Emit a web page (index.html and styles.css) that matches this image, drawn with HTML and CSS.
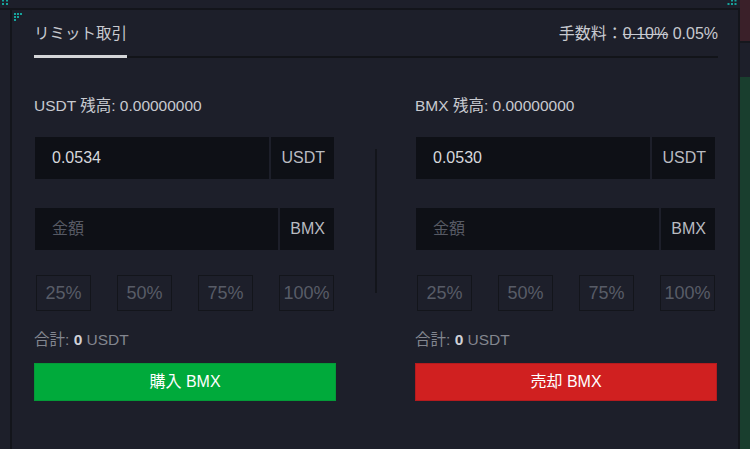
FILE: index.html
```html
<!DOCTYPE html>
<html lang="ja">
<head>
<meta charset="utf-8">
<title>リミット取引</title>
<link rel="stylesheet" href="styles.css">
</head>
<body>
<div class="desktop">
  <div class="main">
    <div class="topstrip">
      <svg class="dots-tl" width="8" height="6" viewBox="0 0 8 6"><rect x="1" y="0" width="2" height="1.5"/><rect x="5" y="0" width="2" height="1.5"/><rect x="1" y="3" width="2" height="2"/><rect x="5" y="3" width="2" height="2"/></svg>
      <svg class="dots-tr" width="12" height="6" viewBox="0 0 12 6"><rect x="6" y="0" width="2" height="1.5"/><rect x="9.5" y="0" width="2" height="1.5"/><rect x="2.5" y="3" width="2" height="2"/><rect x="6" y="3" width="2" height="2"/><rect x="9.5" y="3" width="2" height="2"/></svg>
    </div>
    <div class="body-row">
      <div class="gutter"></div>
      <section class="panel">
        <svg class="handle" width="9" height="9" viewBox="0 0 9 9"><rect x="0" y="0" width="2" height="2"/><rect x="3" y="0" width="2" height="2"/><rect x="6" y="0" width="2" height="2"/><rect x="0" y="3" width="2" height="2"/><rect x="3" y="3" width="2" height="2"/><rect x="0" y="6" width="2" height="2"/></svg>
        <div class="tabbar">
          <div class="tab active">リミット取引</div>
          <div class="fee">手数料：<s>0.10%</s> 0.05%</div>
        </div>
        <div class="columns">
          <div class="col">
            <div class="balance">USDT 残高: 0.00000000</div>
            <div class="field first">
              <div class="input value">0.0534</div>
              <div class="suffix">USDT</div>
            </div>
            <div class="field second">
              <div class="input placeholder">金額</div>
              <div class="suffix">BMX</div>
            </div>
            <div class="pcts">
              <div class="pct">25%</div>
              <div class="pct">50%</div>
              <div class="pct">75%</div>
              <div class="pct">100%</div>
            </div>
            <div class="total">合計: <b>0</b> USDT</div>
            <div class="btn buy">購入 BMX</div>
          </div>
          <div class="divider"></div>
          <div class="col">
            <div class="balance">BMX 残高: 0.00000000</div>
            <div class="field first">
              <div class="input value">0.0530</div>
              <div class="suffix">USDT</div>
            </div>
            <div class="field second">
              <div class="input placeholder">金額</div>
              <div class="suffix">BMX</div>
            </div>
            <div class="pcts">
              <div class="pct">25%</div>
              <div class="pct">50%</div>
              <div class="pct">75%</div>
              <div class="pct">100%</div>
            </div>
            <div class="total">合計: <b>0</b> USDT</div>
            <div class="btn sell">売却 BMX</div>
          </div>
        </div>
      </section>
    </div>
  </div>
  <div class="side">
    <div class="side-red"></div>
    <div class="side-mid"></div>
    <div class="side-green"></div>
  </div>
</div>
</body>
</html>
```
FILE: styles.css
```css
* { box-sizing: border-box; }
html, body {
  margin: 0;
  padding: 0;
  background: #1d1f2a;
  font-family: "Liberation Sans", "Noto Sans CJK JP", sans-serif;
  color: #c8cad0;
  overflow: hidden;
}
.desktop {
  display: flex;
  width: 750px;
  height: 449px;
}
.main {
  width: 740px;
  display: flex;
  flex-direction: column;
}
.topstrip {
  height: 10px;
  border-bottom: 2px solid #13151b;
  display: flex;
  justify-content: space-between;
  align-items: flex-start;
  padding: 0 2px 0 1px;
}
.topstrip svg { fill: #16a39c; display: block; }
.dots-tr { margin-right: 1px; margin-left: auto; }
.body-row {
  flex: 1;
  display: flex;
}
.gutter {
  width: 12px;
  border-right: 2px solid #13151b;
}
.panel {
  position: relative;
  flex: 1;
  border-right: 2px solid #13151b;
  padding: 0 20px 0 22px;
}
.handle {
  position: absolute;
  left: 2px;
  top: 3px;
  fill: #16a39c;
}
.tabbar {
  display: flex;
  justify-content: space-between;
  align-items: flex-end;
  padding-top: 13px;
  border-bottom: 2px solid #121419;
  height: 48px;
}
.tab {
  font-size: 15.5px;
  line-height: 22px;
  padding-bottom: 10px;
  color: #c8cad0;
}
.tab.active {
  border-bottom: 3px solid #d4d5d8;
  margin-bottom: -2px;
  width: 93px;
}
.fee {
  font-size: 16px;
  line-height: 22px;
  padding-bottom: 11px;
  color: #c8cad0;
}
.fee s { text-decoration-thickness: 1px; }
.columns {
  display: grid;
  grid-template-columns: 302px 2px 302px;
  column-gap: 38.5px;
}
.col {
  display: flex;
  flex-direction: column;
}
.balance {
  margin-top: 37px;
  font-size: 15.5px;
  line-height: 22px;
  color: #c8cad0;
}
.field {
  display: flex;
  gap: 2px;
  height: 42px;
  margin: 0 2px 0 1px;
}
.field.first { margin-top: 20px; }
.field.second { margin-top: 29px; }
.input {
  flex: 1;
  background: #0e1016;
  font-size: 16px;
  line-height: 42px;
  padding-left: 17px;
}
.input.value { color: #d6d8dd; }
.input.placeholder { color: #575a64; }
.suffix {
  background: #0e1016;
  font-size: 16px;
  line-height: 42px;
  padding: 0 9px 0 10px;
  color: #b9bbc1;
}
.pcts {
  margin: 25px 2px 0 2px;
  display: flex;
  justify-content: space-between;
}
.pct {
  width: 55px;
  height: 36px;
  border: 1px solid #13151b;
  font-size: 18px;
  line-height: 34px;
  text-align: center;
  color: #585c67;
}
.total {
  margin-top: 18px;
  font-size: 15.5px;
  line-height: 22px;
  color: #83868f;
}
.total b { font-weight: bold; color: #d0d2d7; }
.btn {
  margin-top: 12px;
  height: 38px;
  line-height: 36px;
  text-align: center;
  font-size: 16px;
  color: #ffffff;
}
.btn.buy { background: #00aa3b; border: 1px solid #049a38; }
.btn.sell { background: #d02020; border: 1px solid #b51b1e; }
.divider {
  align-self: start;
  margin-top: 91px;
  height: 144px;
  background: #13151b;
}
.side {
  width: 10px;
  display: flex;
  flex-direction: column;
}
.side-red {
  height: 43px;
  background: #3a2029;
  border-bottom: 2px solid #15171d;
}
.side-mid {
  height: 34px;
  background: #1d1f2a;
}
.side-green {
  flex: 1;
  background: #193e2e;
}
```
